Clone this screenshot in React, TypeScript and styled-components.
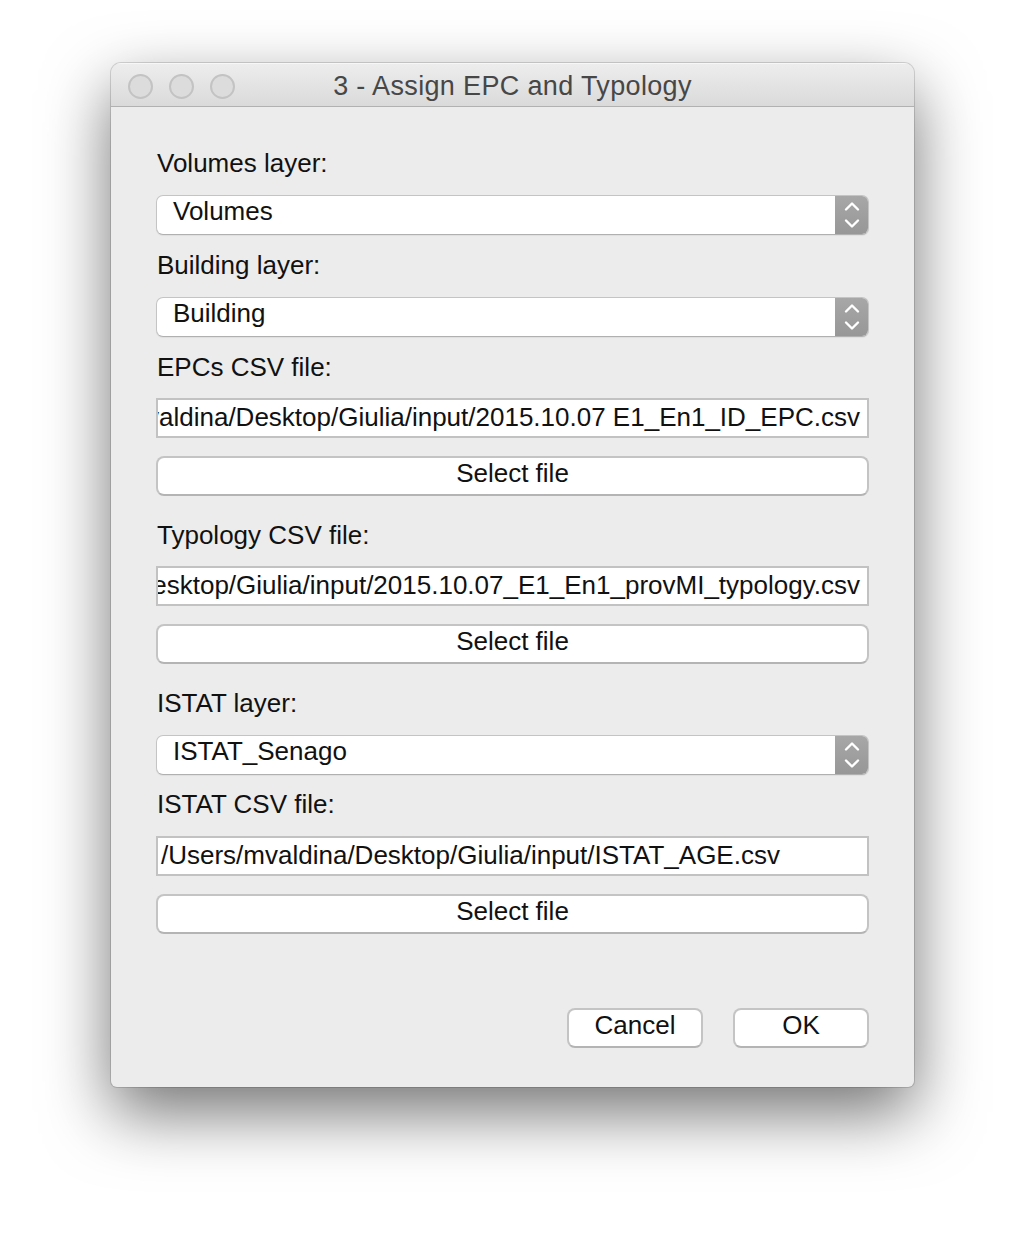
import React from "react";
import styled, { createGlobalStyle } from "styled-components";

const Global = createGlobalStyle`
  html, body { margin: 0; padding: 0; background: #ffffff; }
  body { font-family: "Liberation Sans", Arial, sans-serif; }
`;

const Page = styled.div`
  width: 1026px;
  height: 1248px;
  padding: 63px 0 0 111px;
  box-sizing: border-box;
  overflow: hidden;
`;

const Window = styled.div`
  width: 803px;
  height: 1024px;
  display: flex;
  flex-direction: column;
  background: #ececec;
  border-radius: 10px 10px 6px 6px;
  box-shadow: 0 0 0 1px rgba(0, 0, 0, 0.14), 0 26px 66px rgba(0, 0, 0, 0.55);
  overflow: hidden;
`;

const TitleBar = styled.div`
  height: 44px;
  box-sizing: border-box;
  position: relative;
  display: flex;
  align-items: center;
  justify-content: center;
  background: linear-gradient(#ededed, #dadada);
  border-bottom: 1px solid #b1b1b1;
  border-top: 1px solid #f7f7f7;
`;

const Lights = styled.div`
  position: absolute;
  left: 17px;
  top: 10px;
  display: flex;
  gap: 16px;
`;

const Light = styled.span`
  width: 21px;
  height: 21px;
  border-radius: 50%;
  background: #dcdcdc;
  border: 2px solid #c3c3c3;
`;

const Title = styled.div`
  font-size: 27px;
  letter-spacing: 0.35px;
  color: #474747;
  padding-top: 3px;
`;

const Content = styled.div`
  flex: 1;
  display: flex;
  flex-direction: column;
  padding: 41px 45px 39px 45px;
`;

const Label = styled.div<{ $top: number }>`
  margin-top: ${(p) => p.$top}px;
  margin-left: 1px;
  height: 30px;
  line-height: 30px;
  font-size: 26px;
  color: #111;
`;

const Combo = styled.div<{ $top: number }>`
  margin-top: ${(p) => p.$top}px;
  height: 40px;
  box-sizing: border-box;
  display: flex;
  background: #ffffff;
  border: 1px solid #c4c4c4;
  border-bottom-color: #b0b0b0;
  border-radius: 7px;
  overflow: hidden;
  box-shadow: 0 1px 1px rgba(0, 0, 0, 0.06);
`;

const ComboText = styled.div`
  flex: 1;
  padding: 0 0 7px 16px;
  display: flex;
  align-items: center;
  font-size: 26px;
  color: #111;
`;

const Stepper = styled.div`
  width: 33px;
  display: flex;
  align-items: center;
  justify-content: center;
  background: linear-gradient(#a7a7a7, #979797);
`;

const Field = styled.div<{ $top: number; $end?: boolean }>`
  margin-top: ${(p) => p.$top}px;
  height: 40px;
  box-sizing: border-box;
  display: flex;
  align-items: center;
  justify-content: ${(p) => (p.$end ? "flex-end" : "flex-start")};
  padding: 0 7px 1px 3px;
  background: #ffffff;
  border: 2px solid #c2c2c2;
  overflow: hidden;
  white-space: nowrap;
  font-size: 26px;
  color: #111;
`;

const Button = styled.button<{ $top?: number; $width?: number }>`
  margin-top: ${(p) => p.$top ?? 0}px;
  width: ${(p) => (p.$width ? `${p.$width}px` : "100%")};
  height: 40px;
  box-sizing: border-box;
  padding: 0 0 7px 0;
  background: #ffffff;
  border: 2px solid #c4c4c4;
  border-bottom-color: #b4b4b4;
  border-radius: 8px;
  font-family: "Liberation Sans", Arial, sans-serif;
  font-size: 26px;
  color: #111;
`;

const Footer = styled.div`
  margin-top: auto;
  display: flex;
  justify-content: flex-end;
  gap: 30px;
`;

const Chevrons = () => (
  <svg width="16" height="28" viewBox="0 0 16 28" fill="none">
    <path d="M2 8.5 L8 2.5 L14 8.5" stroke="#ffffff" strokeWidth="2.4" strokeLinecap="round" strokeLinejoin="round" />
    <path d="M2 19.5 L8 25.5 L14 19.5" stroke="#ffffff" strokeWidth="2.4" strokeLinecap="round" strokeLinejoin="round" />
  </svg>
);

const Select = ({ value, top }: { value: string; top: number }) => (
  <Combo $top={top}>
    <ComboText>{value}</ComboText>
    <Stepper>
      <Chevrons />
    </Stepper>
  </Combo>
);

export default function App() {
  return (
    <Page>
      <Global />
      <Window>
        <TitleBar>
          <Lights>
            <Light />
            <Light />
            <Light />
          </Lights>
          <Title>3 - Assign EPC and Typology</Title>
        </TitleBar>
        <Content>
          <Label $top={0}>Volumes layer:</Label>
          <Select value="Volumes" top={17} />
          <Label $top={15}>Building layer:</Label>
          <Select value="Building" top={17} />
          <Label $top={15}>EPCs CSV file:</Label>
          <Field $top={16} $end>
            /Users/mvaldina/Desktop/Giulia/input/2015.10.07 E1_En1_ID_EPC.csv
          </Field>
          <Button $top={18}>Select file</Button>
          <Label $top={24}>Typology CSV file:</Label>
          <Field $top={16} $end>
            /Users/mvaldina/Desktop/Giulia/input/2015.10.07_E1_En1_provMI_typology.csv
          </Field>
          <Button $top={18}>Select file</Button>
          <Label $top={24}>ISTAT layer:</Label>
          <Select value="ISTAT_Senago" top={17} />
          <Label $top={14}>ISTAT CSV file:</Label>
          <Field $top={17}>/Users/mvaldina/Desktop/Giulia/input/ISTAT_AGE.csv</Field>
          <Button $top={18}>Select file</Button>
          <Footer>
            <Button $width={136}>Cancel</Button>
            <Button $width={136}>OK</Button>
          </Footer>
        </Content>
      </Window>
    </Page>
  );
}
